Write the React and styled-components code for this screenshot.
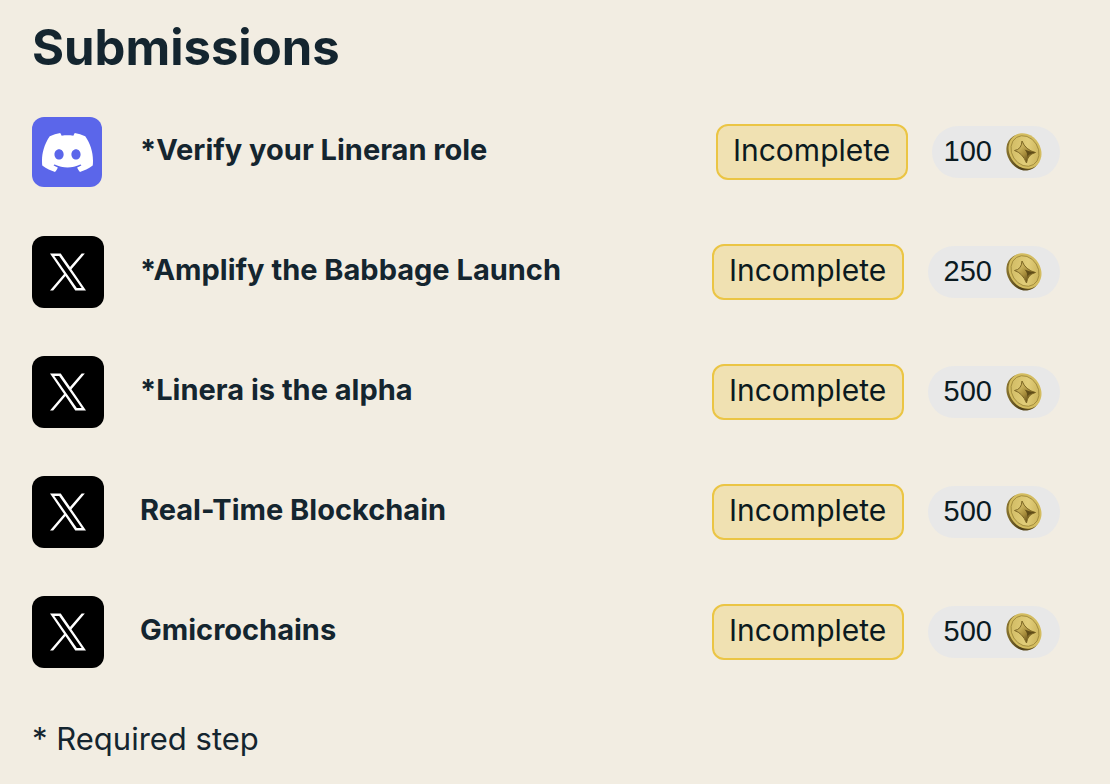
import React from "react";
import styled, { createGlobalStyle } from "styled-components";
import { SiDiscord } from "react-icons/si";

const GlobalStyle = createGlobalStyle`
  * { box-sizing: border-box; }
  body {
    margin: 0;
    background: #f2ede2;
    color: #14252f;
    font-family: Inter, "Liberation Sans", sans-serif;
  }
`;

const Page = styled.main`
  padding: 20px 50px 20px 32px;
`;

const Heading = styled.h1`
  margin: 0 0 40px;
  font-size: 49px;
  line-height: 56px;
  font-weight: 700;
`;

const List = styled.ul`
  display: flex;
  flex-direction: column;
  gap: 48px;
  margin: 0;
  padding: 0;
  list-style: none;
`;

const Row = styled.li`
  display: flex;
  align-items: center;
  height: 72px;
`;

const IconCell = styled.div`
  flex: none;
  width: 72px;
  margin-right: 36px;
`;

const Tile = styled.div`
  display: flex;
  align-items: center;
  justify-content: center;
  width: ${(p) => p.$size}px;
  height: ${(p) => p.$size}px;
  border-radius: 12px;
  background: ${(p) => p.$color};
  color: #fff;
`;

const Title = styled.h2`
  flex: 1;
  margin: 0;
  padding-bottom: 4px;
  font-size: 29px;
  line-height: 36px;
  font-weight: 700;
`;

const Status = styled.span`
  display: flex;
  align-items: center;
  justify-content: center;
  min-width: 192px;
  height: 56px;
  margin-right: 24px;
  padding: 0 14px 4px;
  border: 2px solid #ebc544;
  border-radius: 12px;
  background: #f0e1b2;
  color: #0b1a20;
  font-size: 30px;
  line-height: 36px;
`;

const Reward = styled.span`
  display: flex;
  align-items: center;
  gap: 14px;
  height: 52px;
  padding: 0 18px 0 ${(p) => (p.$tight ? 12 : 16)}px;
  border-radius: 26px;
  background: #e8e8e8;
  color: #0b1a20;
  font-family: "Liberation Sans", sans-serif;
  font-size: 29px;
  line-height: 36px;
`;

const Points = styled.span`
  padding-bottom: 2px;
`;

const Note = styled.p`
  margin: 51px 0 0;
  font-size: 31px;
  line-height: 40px;
`;

function XLogo() {
  return (
    <svg width="36" height="38" viewBox="0 0 1200 1227" fill="currentColor" aria-hidden="true">
      <path d="M714.163 519.284L1160.89 0H1055.03L667.137 450.887L357.328 0H0L468.492 681.821L0 1226.37H105.866L515.491 750.218L842.672 1226.37H1200L714.137 519.284H714.163ZM569.165 687.828L521.697 619.934L144.011 79.6944H306.615L611.412 515.685L658.88 583.579L1055.08 1150.3H892.476L569.165 687.854V687.828Z" />
    </svg>
  );
}

function Coin() {
  return (
    <svg width="36" height="38" viewBox="0 0 36 38" aria-hidden="true">
      <defs>
        <linearGradient id="edge" x1="0" y1="0" x2="1" y2="1">
          <stop offset="0" stopColor="#a28b3a" />
          <stop offset="0.5" stopColor="#4f4018" />
          <stop offset="1" stopColor="#8a742b" />
        </linearGradient>
        <linearGradient id="face" x1="0" y1="0" x2="1" y2="1">
          <stop offset="0" stopColor="#cdb75f" />
          <stop offset="0.55" stopColor="#e2ce7a" />
          <stop offset="1" stopColor="#c2a94e" />
        </linearGradient>
        <linearGradient id="star" x1="0" y1="0" x2="1" y2="1">
          <stop offset="0.3" stopColor="#c8b05a" />
          <stop offset="0.55" stopColor="#a58b3a" />
          <stop offset="0.75" stopColor="#6b561d" />
        </linearGradient>
      </defs>
      <ellipse cx="17" cy="19.5" rx="15.6" ry="19" transform="rotate(-32 17 19.5)" fill="url(#edge)" />
      <ellipse cx="19" cy="18" rx="15.6" ry="18.6" transform="rotate(-32 19 18)" fill="#d4bd60" />
      <ellipse cx="19" cy="18" rx="13.2" ry="16" transform="rotate(-32 19 18)" fill="url(#face)" stroke="#9c863a" strokeWidth="0.8" />
      <path d="M16 8Q19.500 17 29.500 19.500Q21.500 21.500 20.500 30Q16.500 20 8.500 17.500Q15.500 16.500 16 8Z" fill="url(#star)" stroke="#7d6726" strokeWidth="1" strokeLinejoin="round" />
      <path d="M18.500 16.500Q22.500 18.500 29.500 19.500Q22.500 20.500 21 24Q22 20 18.500 16.500Z" fill="#5f4c18" />
    </svg>
  );
}

const submissions = [
  { title: "*Verify your Lineran role", kind: "discord", points: 100 },
  { title: "*Amplify the Babbage Launch", kind: "x", points: 250 },
  { title: "*Linera is the alpha", kind: "x", points: 500 },
  { title: "Real-Time Blockchain", kind: "x", points: 500 },
  { title: "Gmicrochains", kind: "x", points: 500 },
];

function Submission({ title, kind, points }) {
  return (
    <Row>
      <IconCell>
        {kind === "discord" ? (
          <Tile $size={70} $color="#5b66ea">
            <SiDiscord size={51} aria-hidden="true" />
          </Tile>
        ) : (
          <Tile $size={72} $color="#000">
            <XLogo />
          </Tile>
        )}
      </IconCell>
      <Title>{title}</Title>
      <Status>Incomplete</Status>
      <Reward $tight={String(points).startsWith("1")}>
        <Points>{points}</Points>
        <Coin />
      </Reward>
    </Row>
  );
}

export default function App() {
  return (
    <>
      <GlobalStyle />
      <Page>
        <Heading>Submissions</Heading>
        <List>
          {submissions.map((item) => (
            <Submission key={item.title} {...item} />
          ))}
        </List>
        <Note>* Required step</Note>
      </Page>
    </>
  );
}
